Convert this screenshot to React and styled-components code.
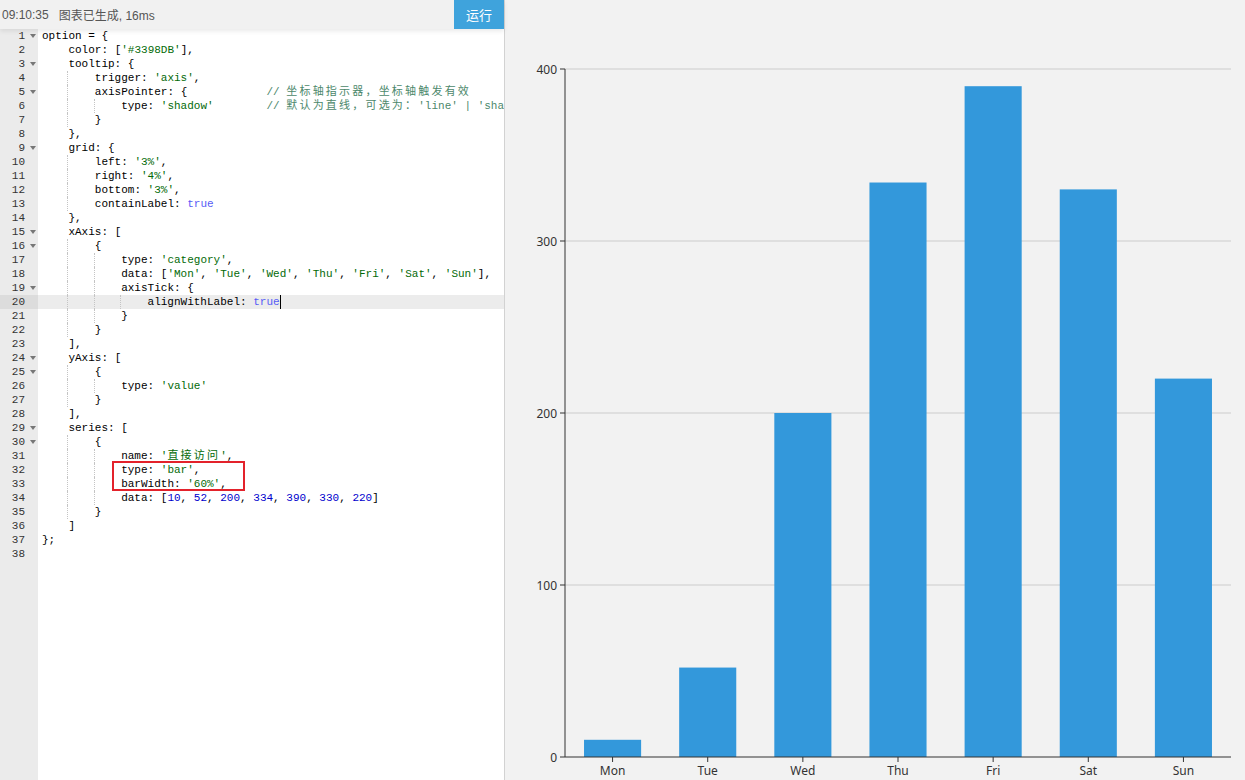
import React from 'react'
import styled, { createGlobalStyle } from 'styled-components'

const GlobalStyle = createGlobalStyle`
  html, body {
    margin: 0;
    padding: 0;
    height: 100%;
  }
  body {
    overflow: hidden;
    background: #f2f2f2;
  }
  #root {
    height: 100%;
  }
`

const CODE = [
  "option = {",
  "    color: ['#3398DB'],",
  "    tooltip: {",
  "        trigger: 'axis',",
  "        axisPointer: {            // 坐标轴指示器，坐标轴触发有效",
  "            type: 'shadow'        // 默认为直线，可选为：'line' | 'shadow'",
  "        }",
  "    },",
  "    grid: {",
  "        left: '3%',",
  "        right: '4%',",
  "        bottom: '3%',",
  "        containLabel: true",
  "    },",
  "    xAxis: [",
  "        {",
  "            type: 'category',",
  "            data: ['Mon', 'Tue', 'Wed', 'Thu', 'Fri', 'Sat', 'Sun'],",
  "            axisTick: {",
  "                alignWithLabel: true",
  "            }",
  "        }",
  "    ],",
  "    yAxis: [",
  "        {",
  "            type: 'value'",
  "        }",
  "    ],",
  "    series: [",
  "        {",
  "            name: '直接访问',",
  "            type: 'bar',",
  "            barWidth: '60%',",
  "            data: [10, 52, 200, 334, 390, 330, 220]",
  "        }",
  "    ]",
  "};",
  "",
]

const FOLDS = new Set([1, 3, 5, 9, 15, 16, 19, 24, 25, 29, 30])
const ACTIVE = 20

const DAYS = ['Mon', 'Tue', 'Wed', 'Thu', 'Fri', 'Sat', 'Sun']
const VALUES = [10, 52, 200, 334, 390, 330, 220]

// tiny js highlighter, ace textmate colours
function tokenize(text) {
  const re = /(\/\/.*)|('[^']*')|(\d+)|([A-Za-z_$][\w$]*)|(\s+)|(.)/g
  const out = []
  let m
  while ((m = re.exec(text))) {
    if (m[1]) out.push(['comment', m[1]])
    else if (m[2]) out.push(['string', m[2]])
    else if (m[3]) out.push(['number', m[3]])
    else if (m[4]) out.push([m[4] === 'true' ? 'boolean' : 'plain', m[4]])
    else out.push(['plain', m[0]])
  }
  return out
}

function withWide(text) {
  const parts = text.split(/([\u3000-\u303f\u4e00-\u9fff\uff00-\uffef]+)/)
  return parts.map((p, i) =>
    i % 2 === 1 ? <Wide key={i}>{p}</Wide> : p
  )
}

function CodeLine({ text, active }) {
  const lead = text.match(/^ */)[0].length
  const levels = Math.floor(lead / 4)
  const rest = text.slice(levels * 4)
  const guides = []
  for (let i = 0; i < levels; i++) {
    guides.push(<Indent key={i} guide={i < levels - 1}>{'    '}</Indent>)
  }
  return (
    <Row active={active}>
      {guides}
      {tokenize(rest).map(([type, t], i) => (
        <Tok key={i} kind={type}>{withWide(t)}</Tok>
      ))}
      {active && <Cursor />}
    </Row>
  )
}

function Chart() {
  const left = 60
  const right = 726
  const top = 69
  const bottom = 757
  const scale = (bottom - top) / 400
  const step = (right - left) / DAYS.length
  const barW = step * 0.6
  const ticks = [0, 100, 200, 300, 400]

  return (
    <ChartSvg viewBox="0 0 740 780" width="740" height="780">
      {ticks.map((t) => {
        const y = bottom - t * scale
        return (
          <g key={t}>
            {t > 0 && <line x1={left} x2={right} y1={y} y2={y} stroke="#ccc" strokeWidth="1" />}
            <line x1={left - 5} x2={left} y1={y} y2={y} stroke="#333" strokeWidth="1" />
            <text x={left - 8} y={y} textAnchor="end" dominantBaseline="central">{t}</text>
          </g>
        )
      })}
      {VALUES.map((v, i) => {
        const cx = left + step * (i + 0.5)
        return (
          <rect key={i} x={cx - barW / 2} y={bottom - v * scale} width={barW} height={v * scale} fill="#3398DB" />
        )
      })}
      <line x1={left} x2={left} y1={top} y2={bottom} stroke="#333" strokeWidth="1" />
      <line x1={left} x2={right} y1={bottom} y2={bottom} stroke="#333" strokeWidth="1" />
      {DAYS.map((d, i) => {
        const cx = left + step * (i + 0.5)
        return (
          <g key={d}>
            <line x1={cx} x2={cx} y1={bottom} y2={bottom + 5} stroke="#333" strokeWidth="1" />
            <text x={cx} y={bottom + 13} textAnchor="middle" dominantBaseline="central">{d}</text>
          </g>
        )
      })}
    </ChartSvg>
  )
}

export default function App() {
  return (
    <Page>
      <GlobalStyle />
      <LeftPane>
        <TopBar>
          <Status>
            <span>09:10:35</span>
            <span>图表已生成, 16ms</span>
          </Status>
          <RunButton>运行</RunButton>
        </TopBar>
        <Editor>
          <Gutter>
            {CODE.map((_, i) => (
              <GutterCell key={i} active={i + 1 === ACTIVE}>
                <LineNo>{i + 1}</LineNo>
                <FoldSlot>{FOLDS.has(i + 1) && <FoldArrow />}</FoldSlot>
              </GutterCell>
            ))}
          </Gutter>
          <CodeArea>
            {CODE.map((line, i) => (
              <CodeLine key={i} text={line} active={i + 1 === ACTIVE} />
            ))}
            <Highlight />
          </CodeArea>
        </Editor>
      </LeftPane>
      <ChartPane>
        <Chart />
      </ChartPane>
    </Page>
  )
}

const Page = styled.div`
  display: flex;
  width: 1245px;
  height: 780px;
  overflow: hidden;
`

const LeftPane = styled.div`
  width: 504px;
  flex-shrink: 0;
  display: flex;
  flex-direction: column;
  border-right: 1px solid #d2d2d2;
  background: #fff;
`

const TopBar = styled.div`
  position: relative;
  z-index: 2;
  height: 29px;
  flex-shrink: 0;
  display: flex;
  align-items: stretch;
  justify-content: space-between;
  background: #f1f1f1;
  box-shadow: 0 2px 5px rgba(0, 0, 0, 0.09);
`

const Status = styled.div`
  display: flex;
  align-items: center;
  gap: 10px;
  padding-left: 2px;
  font-family: "Liberation Sans", "Noto Sans CJK SC", sans-serif;
  font-size: 12px;
  color: #555;
`

const RunButton = styled.button`
  width: 50px;
  border: none;
  margin: 0;
  padding: 0;
  background: #3fa3dc;
  color: #fff;
  font-family: "Noto Sans CJK SC", sans-serif;
  font-size: 13px;
  cursor: pointer;
`

const Editor = styled.div`
  flex: 1;
  display: flex;
  overflow: hidden;
  font-family: "Liberation Mono", "Noto Sans CJK SC", monospace;
  font-size: 11px;
  line-height: 14px;
`

const Gutter = styled.div`
  width: 38px;
  flex-shrink: 0;
  background: #ebebeb;
  color: #333;
`

const GutterCell = styled.div`
  display: flex;
  height: 14px;
  background: ${(p) => (p.active ? '#dcdcdc' : 'transparent')};
`

const LineNo = styled.span`
  width: 25px;
  text-align: right;
`

const FoldSlot = styled.span`
  flex: 1;
  display: flex;
  align-items: center;
  padding-left: 5px;
`

const FoldArrow = styled.span`
  width: 0;
  height: 0;
  border-left: 3px solid transparent;
  border-right: 3px solid transparent;
  border-top: 4px solid #777;
`

const CodeArea = styled.div`
  position: relative;
  flex: 1;
  padding-left: 4px;
  overflow: hidden;
  color: #000;
`

const Row = styled.div`
  height: 14px;
  white-space: pre;
  margin-left: -4px;
  padding-left: 4px;
  background: ${(p) => (p.active ? '#ececec' : 'transparent')};
`

const Indent = styled.span`
  display: inline-block;
  box-sizing: border-box;
  width: 26.4px;
  height: 14px;
  vertical-align: top;
  border-right: 1px dotted ${(p) => (p.guide ? '#c4c4c4' : 'transparent')};
`

const TOKEN_COLORS = {
  plain: '#000',
  string: '#036A07',
  number: '#0000CD',
  boolean: '#585CF6',
  comment: '#4C886B',
}

const Tok = styled.span`
  color: ${(p) => TOKEN_COLORS[p.kind]};
`

const Wide = styled.span`
  letter-spacing: 2.2px;
`

const Cursor = styled.span`
  display: inline-block;
  width: 0;
  height: 14px;
  vertical-align: top;
  border-left: 1px solid #000;
`

const Highlight = styled.div`
  position: absolute;
  left: 74px;
  top: 432px;
  width: 133px;
  height: 30px;
  box-sizing: border-box;
  border: 2px solid #e3222b;
  pointer-events: none;
`

const ChartPane = styled.div`
  flex: 1;
  background: #f2f2f2;

  text {
    font-family: "Noto Sans", "Liberation Sans", sans-serif;
    font-size: 12px;
    fill: #333;
  }
`

const ChartSvg = styled.svg`
  display: block;
`
